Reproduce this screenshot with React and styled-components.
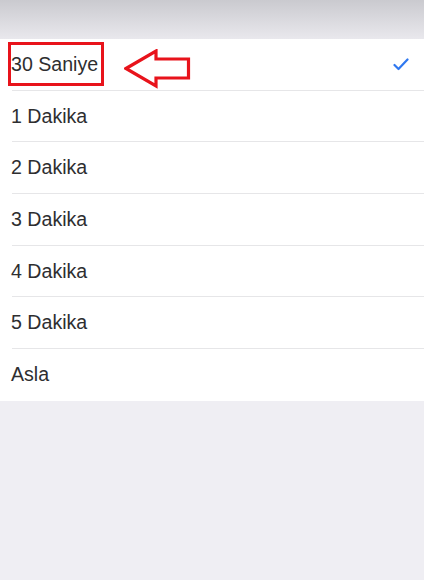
import React from 'react';
import styled, { createGlobalStyle } from 'styled-components';

const GlobalStyle = createGlobalStyle`
  html, body {
    margin: 0;
    padding: 0;
    background: #efeef3;
  }
  body {
    font-family: 'Liberation Sans', Arial, sans-serif;
    -webkit-font-smoothing: antialiased;
  }
`;

const Page = styled.div`
  width: 424px;
  height: 580px;
  background: #efeef3;
  display: flex;
  flex-direction: column;
`;

const TopBand = styled.div`
  height: 39px;
  flex: none;
  background: linear-gradient(#cacacf, #e9e8ed);
`;

const List = styled.ul`
  margin: 0;
  padding: 0;
  list-style: none;
  background: #fff;
`;

const Row = styled.li`
  height: 51.7px;
  box-sizing: border-box;
  display: flex;
  align-items: center;
  padding: 0 15px 1px 11px;
  position: relative;
  &:not(:last-child)::after {
    content: '';
    position: absolute;
    left: 12px;
    right: 0;
    bottom: 0;
    height: 1px;
    background: #e6e6e8;
  }
`;

const Label = styled.span`
  position: relative;
  font-size: 19.6px;
  color: #2e2e30;
`;

const Marker = styled.span`
  position: absolute;
  left: -3px;
  right: -6px;
  top: -11px;
  bottom: -10px;
  border: 3px solid #e8131b;
`;

const Arrow = styled.svg`
  margin-left: 26px;
  margin-top: 9px;
  flex: none;
`;

const Check = styled.svg`
  margin-left: auto;
  flex: none;
`;

const items = ['30 Saniye', '1 Dakika', '2 Dakika', '3 Dakika', '4 Dakika', '5 Dakika', 'Asla'];

export default function App() {
  return (
    <Page>
      <GlobalStyle />
      <TopBand />
      <List>
        {items.map((item, i) => (
          <Row key={item}>
            <Label>
              {item}
              {i === 0 && <Marker />}
            </Label>
            {i === 0 && (
              <>
                <Arrow width="67" height="40" viewBox="0 0 67 40">
                  <polygon
                    points="2,19.5 32,2 32,10 64.5,10 64.5,29 32,29 32,37"
                    fill="none"
                    stroke="#e8131b"
                    strokeWidth="3.2"
                    strokeLinejoin="miter"
                  />
                </Arrow>
                <Check width="16" height="13" viewBox="0 0 16 13">
                  <polyline
                    points="1.5,7 5.5,11 14.5,1.5"
                    fill="none"
                    stroke="#2f78f0"
                    strokeWidth="2.2"
                    strokeLinecap="round"
                    strokeLinejoin="round"
                  />
                </Check>
              </>
            )}
          </Row>
        ))}
      </List>
    </Page>
  );
}
